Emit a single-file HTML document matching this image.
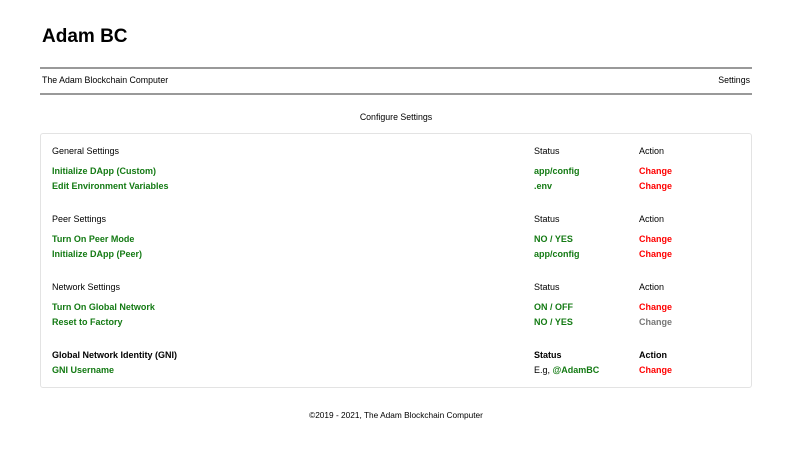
<!DOCTYPE html>
<html><head><meta charset="utf-8"><style>
body{margin:0;width:800px;height:461px;background:#fff;font-family:"Liberation Sans",Arial,sans-serif;color:#000;position:relative;overflow:hidden}
.a{position:absolute;font-size:9px;line-height:11px;white-space:nowrap}
.g{color:#137a13;font-weight:bold}
.r{color:#f00;font-weight:bold}
.gr{color:#777;font-weight:bold}
.b{font-weight:bold}
.hr{position:absolute;left:40px;width:712px;height:2px;background:#999}
</style></head><body>
<div class="a" style="left:42px;top:26px;font-size:19px;line-height:22px;font-weight:bold">Adam BC</div>
<div class="hr" style="top:67px"></div>
<div class="a" style="left:42px;top:75px;font-size:8.8px">The Adam Blockchain Computer</div>
<div class="a" style="right:50px;top:75px;font-size:8.8px">Settings</div>
<div class="hr" style="top:93px"></div>
<div class="a" style="left:0;width:792px;text-align:center;top:112px;font-size:8.8px">Configure Settings</div>
<div style="position:absolute;left:40px;top:133px;width:710px;height:253px;border:1px solid #e3e3e3;border-radius:3px"></div>

<div class="a" style="left:52px;top:146px">General Settings</div>
<div class="a" style="left:534px;top:146px">Status</div>
<div class="a" style="left:639px;top:146px">Action</div>
<div class="a g" style="left:52px;top:166px">Initialize DApp (Custom)</div>
<div class="a g" style="left:534px;top:166px">app/config</div>
<div class="a r" style="left:639px;top:166px">Change</div>
<div class="a g" style="left:52px;top:181px">Edit Environment Variables</div>
<div class="a g" style="left:534px;top:181px">.env</div>
<div class="a r" style="left:639px;top:181px">Change</div>

<div class="a" style="left:52px;top:214px">Peer Settings</div>
<div class="a" style="left:534px;top:214px">Status</div>
<div class="a" style="left:639px;top:214px">Action</div>
<div class="a g" style="left:52px;top:234px">Turn On Peer Mode</div>
<div class="a g" style="left:534px;top:234px">NO / YES</div>
<div class="a r" style="left:639px;top:234px">Change</div>
<div class="a g" style="left:52px;top:249px">Initialize DApp (Peer)</div>
<div class="a g" style="left:534px;top:249px">app/config</div>
<div class="a r" style="left:639px;top:249px">Change</div>

<div class="a" style="left:52px;top:282px">Network Settings</div>
<div class="a" style="left:534px;top:282px">Status</div>
<div class="a" style="left:639px;top:282px">Action</div>
<div class="a g" style="left:52px;top:302px">Turn On Global Network</div>
<div class="a g" style="left:534px;top:302px">ON / OFF</div>
<div class="a r" style="left:639px;top:302px">Change</div>
<div class="a g" style="left:52px;top:317px">Reset to Factory</div>
<div class="a g" style="left:534px;top:317px">NO / YES</div>
<div class="a gr" style="left:639px;top:317px">Change</div>

<div class="a b" style="left:52px;top:350px">Global Network Identity (GNI)</div>
<div class="a b" style="left:534px;top:350px">Status</div>
<div class="a b" style="left:639px;top:350px">Action</div>
<div class="a g" style="left:52px;top:365px">GNI Username</div>
<div class="a" style="left:534px;top:365px">E.g, <span class="g">@AdamBC</span></div>
<div class="a r" style="left:639px;top:365px">Change</div>

<div class="a" style="left:0;width:792px;text-align:center;top:410px;font-size:8.3px">©2019 - 2021, The Adam Blockchain Computer</div>
</body></html>
